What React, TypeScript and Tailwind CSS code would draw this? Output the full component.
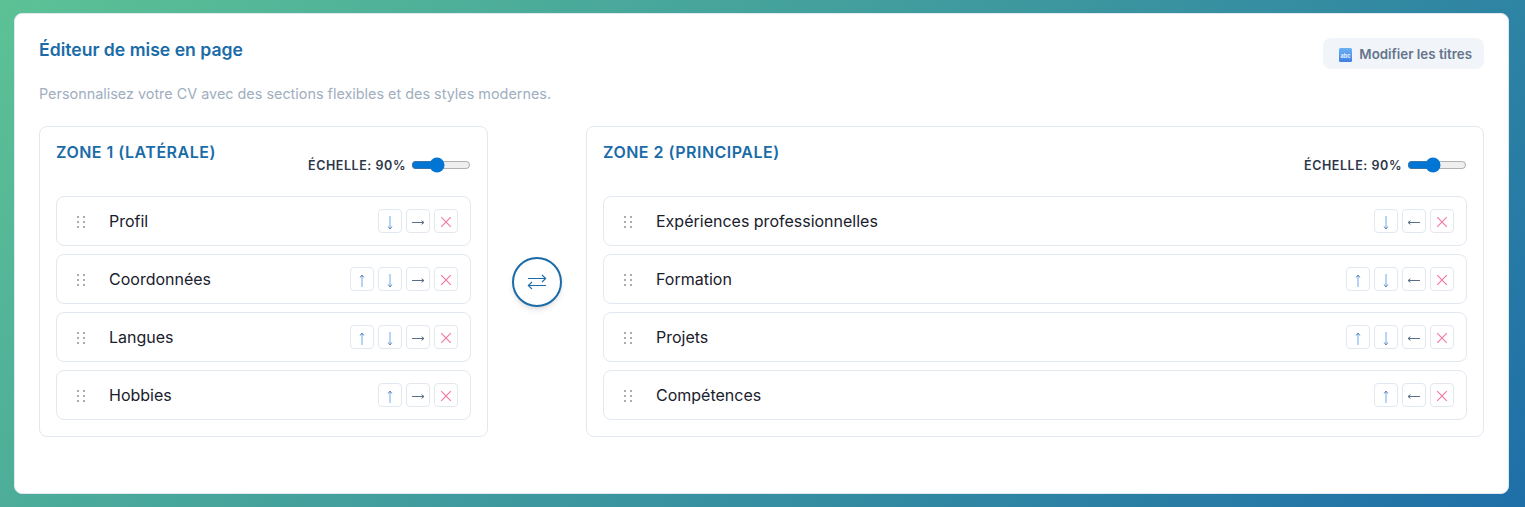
import React from 'react'

interface IZone {
  title: string
  move: 'left' | 'right'
  items: string[]
}

const zones: IZone[] = [
  { title: 'ZONE 1 (LATÉRALE)', move: 'right', items: ['Profil', 'Coordonnées', 'Langues', 'Hobbies'] },
  {
    title: 'ZONE 2 (PRINCIPALE)',
    move: 'left',
    items: ['Expériences professionnelles', 'Formation', 'Projets', 'Compétences'],
  },
]

const Grip = () => (
  <svg width={10} height={14} viewBox="0 0 10 14" fill="#aeacaa" className="mt-0.5 shrink-0">
    <rect x="1" y="1" width="2" height="2" />
    <rect x="7" y="1" width="2" height="2" />
    <rect x="1" y="6" width="2" height="2" />
    <rect x="7" y="6" width="2" height="2" />
    <rect x="1" y="11" width="2" height="2" />
    <rect x="7" y="11" width="2" height="2" />
  </svg>
)

const AbcIcon = () => (
  <svg width={13} height={14} viewBox="0 0 13 14" className="shrink-0">
    <defs>
      <linearGradient id="abc" x1="0" y1="0" x2="0" y2="1">
        <stop offset="0" stopColor="#6cb0f5" />
        <stop offset="1" stopColor="#3f7fe0" />
      </linearGradient>
    </defs>
    <rect width="13" height="14" rx="1.5" fill="url(#abc)" />
    <text x="6.5" y="9.5" textAnchor="middle" fontSize="5.5" fontWeight="700" fill="#e8f2ff" fontFamily="Inter, sans-serif">
      abc
    </text>
  </svg>
)

const ArrowUp = () => (
  <svg width={16} height={16} viewBox="0 0 16 16" fill="none">
    <path d="M8 5v11" stroke="#6fa8f2" />
    <path d="M6.200 6.500 8 4l1.800 2.500" stroke="#4f7db8" />
  </svg>
)

const ArrowDown = () => (
  <svg width={16} height={16} viewBox="0 0 16 16" fill="none">
    <path d="M8 3v11.500" stroke="#6fa8f2" />
    <path d="M6.200 13.500 8 16l1.800-2.500" stroke="#4f7db8" />
  </svg>
)

const ArrowSide = ({ dir }: { dir: 'left' | 'right' }) => (
  <svg width={16} height={16} viewBox="0 0 16 16" fill="none" stroke="#5a6e88">
    {dir === 'right' ? <path d="M2 9.500h12M11.500 7.700 14 9.500l-2.500 1.800" /> : <path d="M14 9.500H2M4.500 7.700 2 9.500l2.500 1.800" />}
  </svg>
)

const Cross = () => (
  <svg width={12} height={12} viewBox="0 0 12 12" fill="none" stroke="#f0769f" strokeWidth={1.1} className="mt-px">
    <path d="M1.200 1.200l9.600 9.600M10.800 1.200l-9.600 9.600" />
  </svg>
)

const IconButton = ({ children }: { children: React.ReactNode }) => (
  <button className="w-6 h-6 flex items-center justify-center rounded border border-[#e2e8f0] bg-white">
    {children}
  </button>
)

const Row = ({ name, move, first, last }: { name: string; move: 'left' | 'right'; first: boolean; last: boolean }) => (
  <div className="h-[50px] px-3 flex items-center border border-[#e2e8f0] rounded-lg bg-white">
    <span className="ml-[7px] w-[33px] flex">
      <Grip />
    </span>
    <span className="text-base text-[#1a202c]">{name}</span>
    <div className="ml-auto gap-1 flex">
      {!first && (
        <IconButton>
          <ArrowUp />
        </IconButton>
      )}
      {!last && (
        <IconButton>
          <ArrowDown />
        </IconButton>
      )}
      <IconButton>
        <ArrowSide dir={move} />
      </IconButton>
      <IconButton>
        <Cross />
      </IconButton>
    </div>
  </div>
)

const Zone = ({ zone }: { zone: IZone }) => (
  <div className="h-[311px] p-4 border border-[#e2e8f0] rounded-lg">
    <div className="h-[53px] flex justify-between">
      <h3 className="text-base leading-[19px] font-semibold tracking-[0.5px] text-[#1a6ba8]">{zone.title}</h3>
      <label className="mt-[12px] h-5 gap-[5px] flex items-center text-[12.5px] font-semibold tracking-[0.55px] text-[#2d3748]">
        <span className="mt-0.5">ÉCHELLE: 90%</span>
        <input type="range" min={50} max={150} defaultValue={90} className="w-[60px] m-0 accent-[#0075d4]" />
      </label>
    </div>
    <div className="gap-2 flex flex-col">
      {zone.items.map((item, i) => (
        <Row key={item} name={item} move={zone.move} first={i === 0} last={i === zone.items.length - 1} />
      ))}
    </div>
  </div>
)

export default function App() {
  return (
    <div
      className="h-[507px] pt-[13px] pl-[14px] pr-4 overflow-hidden bg-[linear-gradient(135deg,#5cc295,#1e6fa8)]"
      style={{ fontFamily: 'Inter, sans-serif' }}
    >
      <div className="h-[481px] px-6 pt-6 bg-white rounded-lg border border-[#e2e8f0]">
        <div className="flex justify-between">
          <h2 className="mt-[1px] text-[17.6px] leading-[22px] font-semibold text-[#1a6ba8]">Éditeur de mise en page</h2>
          <button className="h-[31px] pt-[3px] pl-4 pr-3 gap-[7px] flex items-center rounded-lg bg-[#f1f5f9] text-[13.33px] font-semibold text-[#64748b]">
            <AbcIcon />
            Modifier les titres
          </button>
        </div>
        <p className="mt-[14px] text-[14.4px] leading-[22px] text-[#a0aec0]">
          Personnalisez votre CV avec des sections flexibles et des styles modernes.
        </p>
        <div className="mt-[21px] grid grid-cols-[1fr_auto_2fr] gap-6">
          <Zone zone={zones[0]} />
          <div className="h-[311px] flex items-center">
            <button className="w-[50px] h-[50px] flex items-center justify-center rounded-full border-2 border-[#1a6ba8] bg-white shadow-md">
              <svg width={20} height={18} viewBox="0 0 20 18" fill="none" stroke="#1a6ba8" strokeWidth={1.1}>
                <path d="M1 5.500h18M15 2l3.700 3.500L15 9M19 12.500H1M5 9l-3.700 3.500L5 16" />
              </svg>
            </button>
          </div>
          <Zone zone={zones[1]} />
        </div>
      </div>
    </div>
  )
}
